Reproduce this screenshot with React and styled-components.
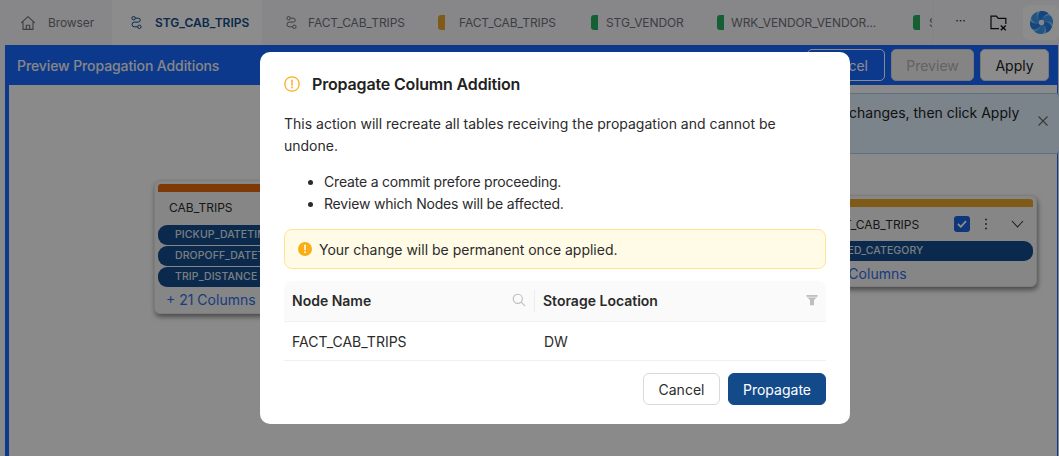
import React from 'react';
import styled, { createGlobalStyle } from 'styled-components';

const Global = createGlobalStyle`
  html, body { margin: 0; padding: 0; height: 100%; overflow: hidden; background: #fff; }
  #root { height: 100%; }
  * { box-sizing: border-box; }
  body { font-family: Inter, "Liberation Sans", sans-serif; }
`;

const Page = styled.div`
  position: relative;
  width: 1059px;
  height: 456px;
  overflow: hidden;
  display: flex;
  flex-direction: column;
  background: #f6f7f9;
`;

const TabBar = styled.div`
  height: 45px;
  flex: none;
  display: flex;
  align-items: stretch;
  background: #f6f6f9;
  padding-left: 5px;
  position: relative;
`;

const Tab = styled.div`
  flex: none;
  width: ${p => p.$w}px;
  display: flex;
  align-items: center;
  gap: ${p => p.$gap}px;
  padding-left: ${p => p.$pad}px;
  font-size: 12px;
  letter-spacing: ${p => (p.$active ? 0 : -0.1)}px;
  color: ${p => (p.$active ? '#134b8a' : '#6f7277')};
  font-weight: ${p => (p.$active ? 600 : 400)};
  background: ${p => (p.$active ? '#fff' : 'transparent')};
  white-space: nowrap;
`;

const Pill = styled.span`
  flex: none;
  width: 7px;
  height: 15px;
  border-radius: 3px 0 0 3px;
  background: ${p => p.$color};
`;

const TabTools = styled.div`
  position: absolute;
  top: 0;
  right: 0;
  width: 127px;
  height: 45px;
  display: flex;
  align-items: center;
  background: #f6f6f9;
  border-left: 1px solid #eceef1;
`;

const More = styled.span`
  width: 55px;
  text-align: center;
  font-size: 12px;
  line-height: 12px;
  padding-bottom: 4px;
  color: #222;
`;

const FolderBtn = styled.span`
  width: 22px;
  display: flex;
  justify-content: center;
`;

const LogoTile = styled.span`
  width: 36px;
  height: 35px;
  margin-left: 13px;
  border-radius: 6px;
  background: #fff;
  display: flex;
  align-items: center;
  justify-content: center;
`;

const Preview = styled.div`
  flex: 1;
  margin-left: 5px;
  margin-right: 1px;
  display: flex;
  flex-direction: column;
  background: #1869ff;
  padding: 0 1px 0 4px;
  min-height: 0;
`;

const PreviewHead = styled.div`
  height: 40px;
  flex: none;
  display: flex;
  align-items: center;
  padding-left: 8px;
  padding-right: 8px;
  gap: 6px;
`;

const PreviewTitle = styled.div`
  flex: 1;
  font-size: 14px;
  font-weight: 500;
  letter-spacing: -0.1px;
  color: #f4f4f4;
`;

const HeadButton = styled.button`
  height: 32px;
  width: ${p => p.$w}px;
  font: 400 14px Inter, sans-serif;
  border-radius: 5px;
  padding: 0;
  border: 1px solid ${p => (p.$ghost ? '#fff' : '#d9d9d9')};
  background: ${p => (p.$ghost ? 'transparent' : p.$off ? '#f0f0f0' : '#fff')};
  color: ${p => (p.$ghost ? '#fff' : p.$off ? '#b4b4b4' : '#222')};
  text-align: ${p => (p.$ghost ? 'right' : 'center')};
  padding-right: ${p => (p.$ghost ? 16 : 0)}px;
`;

const Canvas = styled.div`
  flex: 1;
  position: relative;
  background: #fbfbfb;
`;

const Banner = styled.div`
  position: absolute;
  top: 8px;
  right: -3px;
  width: 219px;
  height: 61px;
  background: #e0f1fe;
  border: 1px solid #a9cdf5;
  border-radius: 4px;
  padding: 8px 0 0 7px;
  font-size: 14px;
  line-height: 22px;
  color: #222;
  white-space: nowrap;
`;

const BannerClose = styled.span`
  position: absolute;
  right: 10px;
  top: 21px;
  display: flex;
`;

const Node = styled.div`
  position: absolute;
  left: ${p => p.$x}px;
  top: ${p => p.$y}px;
  width: ${p => p.$w}px;
  height: ${p => p.$h}px;
  padding: 3px 3px;
  background: #f5f5f5;
  border: 1px solid #e4e4e4;
  border-radius: 6px;
  box-shadow: 1px 3px 5px rgba(0, 0, 0, 0.45);
  display: flex;
  flex-direction: column;
`;

const NodeBar = styled.div`
  height: 8px;
  flex: none;
  border-radius: 3px 3px 0 0;
  background: ${p => p.$color};
`;

const NodeHead = styled.div`
  height: ${p => p.$h}px;
  flex: none;
  display: flex;
  align-items: center;
  padding-left: 11px;
  padding-bottom: ${p => (p.$h === 33 ? 2 : 0)}px;
  font-size: 12px;
  color: #2a2a2a;
  white-space: nowrap;
`;

const NodeTools = styled.div`
  margin-left: auto;
  display: flex;
  align-items: center;
  padding-right: 9px;
`;

const Check = styled.span`
  width: 16px;
  height: 16px;
  border-radius: 3px;
  background: #1b63e0;
  display: flex;
  align-items: center;
  justify-content: center;
`;

const Kebab = styled.span`
  display: flex;
  margin-left: 14px;
  margin-right: 23px;
`;

const ColumnPill = styled.div`
  height: 20px;
  flex: none;
  margin-bottom: 1px;
  border-radius: 9px;
  background: #134b8a;
  color: #dfe6ee;
  font-size: 10.5px;
  font-weight: 500;
  line-height: 20px;
  padding-left: ${p => p.$pad}px;
  white-space: nowrap;
  overflow: hidden;
  letter-spacing: 0.1px;
`;

const MoreCols = styled.div`
  margin-top: 2px;
  padding-left: ${p => p.$pad}px;
  font-size: 14px;
  line-height: 20px;
  color: #2d6de6;
  white-space: nowrap;
`;

const Scrim = styled.div`
  position: absolute;
  inset: 0;
  background: rgba(0, 0, 0, 0.45);
`;

const Modal = styled.div`
  position: absolute;
  left: 260px;
  top: 52px;
  width: 590px;
  height: 372px;
  background: #fff;
  border-radius: 10px;
  padding: 22px 24px 20px;
  display: flex;
  flex-direction: column;
  color: #2b2b2b;
`;

const ModalTitle = styled.div`
  height: 20px;
  display: flex;
  align-items: center;
  gap: 12px;
  font-size: 16px;
  font-weight: 600;
  letter-spacing: -0.16px;
  color: #222;
`;

const Para = styled.p`
  margin: 19px 0 0;
  font-size: 14px;
  line-height: 22px;
`;

const Bullets = styled.ul`
  margin: 14px 0 0;
  padding-left: 40px;
  font-size: 14px;
  line-height: 22px;
  letter-spacing: -0.19px;
`;

const Alert = styled.div`
  margin-top: 14px;
  height: 40px;
  flex: none;
  display: flex;
  align-items: center;
  gap: 7px;
  padding-left: 13px;
  font-size: 14px;
  background: #fffbe6;
  border: 1px solid #ffe58f;
  border-radius: 8px;
`;

const Table = styled.div`
  margin-top: 12px;
  display: grid;
  grid-template-columns: 251px 291px;
`;

const HeadCell = styled.div`
  height: 41px;
  display: flex;
  align-items: center;
  justify-content: space-between;
  background: #fafafa;
  border-bottom: 1px solid #f0f0f0;
  padding: 0 ${p => p.$right}px 2px 8px;
  font-size: 14px;
  font-weight: 600;
  color: #2b2b2b;
  position: relative;
  border-radius: ${p => p.$radius};
  &::after {
    content: ${p => (p.$divider ? '""' : 'none')};
    position: absolute;
    right: 0;
    top: 9px;
    height: 22px;
    width: 1px;
    background: #ececec;
  }
`;

const BodyCell = styled.div`
  height: 39px;
  display: flex;
  align-items: center;
  padding-left: ${p => p.$pad}px;
  font-size: 14px;
  border-bottom: 1px solid #f0f0f0;
`;

const Footer = styled.div`
  margin-top: 12px;
  display: flex;
  justify-content: flex-end;
  gap: 8px;
`;

const FooterBtn = styled.button`
  height: 32px;
  width: ${p => p.$w}px;
  border-radius: 6px;
  padding: 0;
  font: 400 14px Inter, sans-serif;
  background: ${p => (p.$primary ? '#134b8a' : '#fff')};
  color: ${p => (p.$primary ? '#fff' : '#2b2b2b')};
  border: 1px solid ${p => (p.$primary ? '#134b8a' : '#d9d9d9')};
`;

const Lineage = ({ color }) => (
  <svg width="11" height="13" viewBox="0 0 11 13" fill="none" stroke={color} strokeWidth="1">
    <circle cx="2.6" cy="2.2" r="1.7" />
    <circle cx="8.4" cy="10.8" r="1.7" />
    <path d="M4.3 2.2h3a1.9 1.9 0 0 1 0 3.9H3.4a1.9 1.9 0 0 0 0 4.7h3.3" />
  </svg>
);

const Home = () => (
  <svg width="16" height="16" viewBox="0 0 16 16" fill="none" stroke="#6f7277" strokeWidth="1.1" strokeLinejoin="round">
    <path d="M1.2 7.8 8 1.6l6.8 6.2M3 6.4v8h10v-8M6.3 14.4v-4.2h3.4v4.2" />
  </svg>
);

const FolderX = () => (
  <svg width="18" height="16" viewBox="0 0 18 16" fill="none" stroke="#111" strokeWidth="1.2">
    <path d="M9 13.6H1V1.2h5.4l1.8 2.2h7.6v5.6" />
    <path d="M10.8 10.4l5 4.8M15.8 10.4l-5 4.8" strokeWidth="1.4" />
  </svg>
);

const Logo = () => (
  <svg width="25" height="27" viewBox="0 0 24 26">
    <circle cx="12" cy="13" r="11" fill="#7cc6f7" />
    {[0, 60, 120, 180, 240, 300].map(a => (
      <path key={a} transform={`rotate(${a} 12 13)`} d="M12 13C8.5 10.5 7.5 5.5 11 2c3.5-.4 6.5.6 7.6 2.6C15 5 13 8.5 12 13z" fill={a % 120 === 0 ? '#2a7fe8' : '#3f9cf0'} />
    ))}
    <circle cx="12" cy="13" r="2.6" fill="#f0f8ff" />
  </svg>
);

const Warn = () => (
  <svg width="16" height="16" viewBox="0 0 16 16" fill="none">
    <circle cx="8" cy="8" r="7.2" stroke="#faad14" strokeWidth="1.2" />
    <path d="M8 4.2v5" stroke="#faad14" strokeWidth="1.4" strokeLinecap="round" />
    <circle cx="8" cy="11.4" r=".9" fill="#faad14" />
  </svg>
);

const WarnFill = () => (
  <svg width="14" height="14" viewBox="0 0 14 14">
    <circle cx="7" cy="7" r="7" fill="#faad14" />
    <path d="M7 3.3v4.4" stroke="#fff" strokeWidth="1.5" strokeLinecap="round" />
    <circle cx="7" cy="10.2" r=".9" fill="#fff" />
  </svg>
);

const Search = () => (
  <svg width="14" height="14" viewBox="0 0 14 14" fill="none" stroke="#bdbdbd" strokeWidth="1.1">
    <circle cx="5.8" cy="5.8" r="4.6" />
    <path d="M9.2 9.2l4 4" />
  </svg>
);

const Filter = () => (
  <svg width="12" height="12" viewBox="0 0 12 12" fill="#bfbfbf">
    <path d="M.5 1h11v1.8L8 6v5.2H4V6L.5 2.8z" />
    <path d="M1 3.2h10" stroke="#fff" strokeWidth=".6" />
  </svg>
);

const Close = () => (
  <svg width="12" height="12" viewBox="0 0 12 12" stroke="#666" strokeWidth="1.1">
    <path d="M1.5 1.5l9 9M10.5 1.5l-9 9" />
  </svg>
);

const Tick = () => (
  <svg width="10" height="8" viewBox="0 0 10 8" fill="none" stroke="#fff" strokeWidth="1.8">
    <path d="M1 4l2.8 2.8L9 1.2" />
  </svg>
);

const Dots = () => (
  <svg width="4" height="12" viewBox="0 0 4 12" fill="#444">
    <circle cx="2" cy="1.5" r="1" />
    <circle cx="2" cy="6" r="1" />
    <circle cx="2" cy="10.5" r="1" />
  </svg>
);

const Chevron = () => (
  <svg width="13" height="8" viewBox="0 0 13 8" fill="none" stroke="#333" strokeWidth="1.1">
    <path d="M1 1l5.5 6L12 1" />
  </svg>
);

export default function App() {
  return (
    <Page>
      <Global />
      <TabBar>
        <Tab $w={107} $gap={12} $pad={15}><Home />Browser</Tab>
        <Tab $w={150} $gap={13} $pad={19} $active><Lineage color="#134b8a" />STG_CAB_TRIPS</Tab>
        <Tab $w={155} $gap={11} $pad={24}><Lineage color="#6f7277" />FACT_CAB_TRIPS</Tab>
        <Tab $w={153} $gap={14} $pad={21}><Pill $color="#e9a72c" />FACT_CAB_TRIPS</Tab>
        <Tab $w={147} $gap={8} $pad={21}><Pill $color="#27ae60" />STG_VENDOR</Tab>
        <Tab $w={196} $gap={7} $pad={0}><Pill $color="#27ae60" />WRK_VENDOR_VENDOR...</Tab>
        <Tab $w={60} $gap={9} $pad={0}><Pill $color="#27ae60" />STG</Tab>
        <TabTools>
          <More>···</More>
          <FolderBtn><FolderX /></FolderBtn>
          <LogoTile><Logo /></LogoTile>
        </TabTools>
      </TabBar>
      <Preview>
        <PreviewHead>
          <PreviewTitle>Preview Propagation Additions</PreviewTitle>
          <HeadButton $ghost $w={78}>Cancel</HeadButton>
          <HeadButton $off $w={83}>Preview</HeadButton>
          <HeadButton $w={69}>Apply</HeadButton>
        </PreviewHead>
        <Canvas>
          <Banner>
            changes, then click Apply
            <BannerClose><Close /></BannerClose>
          </Banner>
          <Node $x={145} $y={95} $w={210} $h={134}>
            <NodeBar $color="#e8680c" />
            <NodeHead $h={33}>CAB_TRIPS</NodeHead>
            <ColumnPill $pad={17}>PICKUP_DATETIME</ColumnPill>
            <ColumnPill $pad={17}>DROPOFF_DATETIME</ColumnPill>
            <ColumnPill $pad={17}>TRIP_DISTANCE</ColumnPill>
            <MoreCols $pad={8}>+ 21 Columns</MoreCols>
          </Node>
          <Node $x={797} $y={110} $w={231} $h={92}>
            <NodeBar $color="#e9a72c" />
            <NodeHead $h={34}>
              FACT_CAB_TRIPS
              <NodeTools><Check><Tick /></Check><Kebab><Dots /></Kebab><Chevron /></NodeTools>
            </NodeHead>
            <ColumnPill $pad={6}>DERIVED_CATEGORY</ColumnPill>
            <MoreCols $pad={7}>+ 21 Columns</MoreCols>
          </Node>
        </Canvas>
      </Preview>
      <Scrim />
      <Modal>
        <ModalTitle><Warn />Propagate Column Addition</ModalTitle>
        <Para>This action will recreate all tables receiving the propagation and cannot be undone.</Para>
        <Bullets>
          <li>Create a commit prefore proceeding.</li>
          <li>Review which Nodes will be affected.</li>
        </Bullets>
        <Alert><WarnFill />Your change will be permanent once applied.</Alert>
        <Table>
          <HeadCell $right={9} $radius="8px 0 0 0" $divider>Node Name<Search /></HeadCell>
          <HeadCell $right={8} $radius="0 8px 0 0">Storage Location<Filter /></HeadCell>
          <BodyCell $pad={8}>FACT_CAB_TRIPS</BodyCell>
          <BodyCell $pad={9}>DW</BodyCell>
        </Table>
        <Footer>
          <FooterBtn $w={77}>Cancel</FooterBtn>
          <FooterBtn $w={98} $primary>Propagate</FooterBtn>
        </Footer>
      </Modal>
    </Page>
  );
}
